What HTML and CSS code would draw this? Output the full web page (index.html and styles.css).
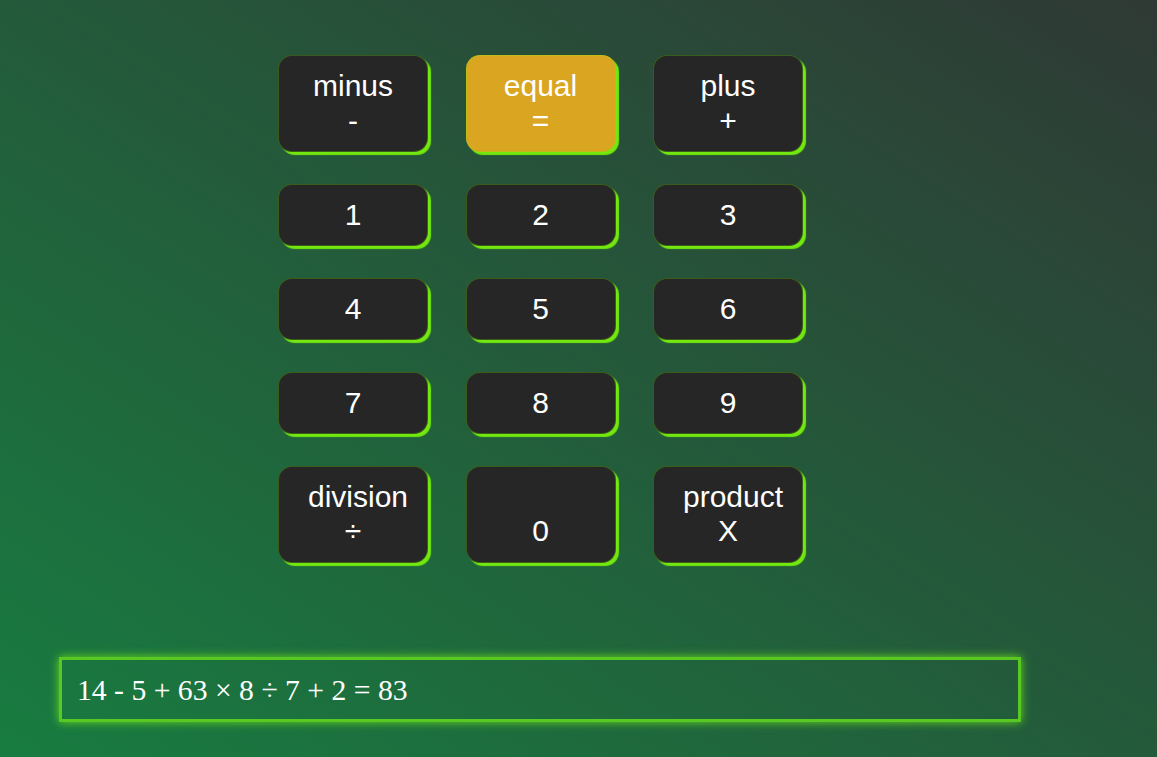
FILE: index.html
```html
<!DOCTYPE html>
<html lang="en">
<head>
<meta charset="utf-8">
<title>Calculator</title>
<link rel="stylesheet" href="styles.css">
</head>
<body>
<main class="page">
  <div class="keypad">
    <button class="key tall">minus<br>-</button>
    <button class="key tall equal">equal<br>=</button>
    <button class="key tall">plus<br>+</button>
    <button class="key">1</button>
    <button class="key">2</button>
    <button class="key">3</button>
    <button class="key">4</button>
    <button class="key">5</button>
    <button class="key">6</button>
    <button class="key">7</button>
    <button class="key">8</button>
    <button class="key">9</button>
    <button class="key tall">division<br>÷</button>
    <button class="key tall"><br>0</button>
    <button class="key tall">product<br>X</button>
  </div>
  <div class="display">14 - 5 + 63 × 8 ÷ 7 + 2 = 83</div>
</main>
</body>
</html>
```
FILE: styles.css
```css
html, body {
  height: 100%;
  margin: 0;
}
body {
  background: linear-gradient(to top right, #187c40, #2f3935);
  font-family: "Liberation Sans", Arial, sans-serif;
}
.page {
  display: flex;
  flex-direction: column;
  align-items: flex-start;
  padding-top: 55px;
}
.keypad {
  display: grid;
  grid-template-columns: repeat(3, 150px);
  column-gap: 37.5px;
  row-gap: 31.5px;
  margin-left: 278px;
}
.key {
  box-sizing: border-box;
  width: 150px;
  padding: 13px 29px;
  border: 1px solid rgba(124, 252, 0, 0.25);
  border-radius: 14px;
  background: #262626;
  color: #ffffff;
  font-family: "Liberation Sans", Arial, sans-serif;
  font-size: 30px;
  line-height: 34.5px;
  text-align: center;
  box-shadow: 3px 3px 1px #72e80e;
}
.equal {
  background: #daa520;
}
.display {
  box-sizing: border-box;
  width: 962px;
  height: 65px;
  margin: 94px 0 0 59px;
  padding: 0 15px;
  border: 3px solid #58c823;
  box-shadow: 0 0 9px #66dd1a;
  color: #ffffff;
  font-family: "Liberation Serif", "Times New Roman", serif;
  font-size: 29.7px;
  line-height: 60px;
}
```
